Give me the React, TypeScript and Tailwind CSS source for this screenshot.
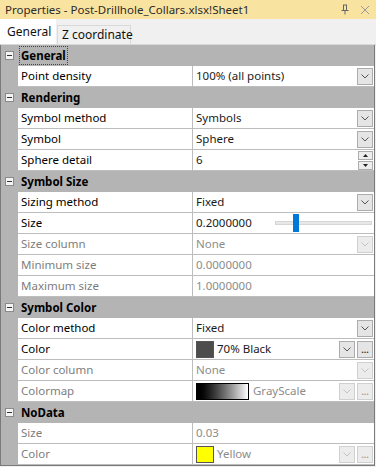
import React from "react";

type Prop = {
  label: string;
  value?: string;
  disabled?: boolean;
  control?: "drop" | "spin" | "slider" | "color" | "colormap" | "none";
  swatch?: string;
};

type Section = { title: string; props: Prop[] };

const sections: Section[] = [
  {
    title: "General",
    props: [{ label: "Point density", value: "100% (all points)", control: "drop" }],
  },
  {
    title: "Rendering",
    props: [
      { label: "Symbol method", value: "Symbols", control: "drop" },
      { label: "Symbol", value: "Sphere", control: "drop" },
      { label: "Sphere detail", value: "6", control: "spin" },
    ],
  },
  {
    title: "Symbol Size",
    props: [
      { label: "Sizing method", value: "Fixed", control: "drop" },
      { label: "Size", value: "0.2000000", control: "slider" },
      { label: "Size column", value: "None", control: "drop", disabled: true },
      { label: "Minimum size", value: "0.0000000", disabled: true },
      { label: "Maximum size", value: "1.0000000", disabled: true },
    ],
  },
  {
    title: "Symbol Color",
    props: [
      { label: "Color method", value: "Fixed", control: "drop" },
      { label: "Color", value: "70% Black", control: "color", swatch: "#4d4d4d" },
      { label: "Color column", value: "None", control: "drop", disabled: true },
      { label: "Colormap", value: "GrayScale", control: "colormap", disabled: true },
    ],
  },
  {
    title: "NoData",
    props: [
      { label: "Size", value: "0.03", disabled: true },
      { label: "Color", value: "Yellow", control: "color", swatch: "#ffff00", disabled: true },
    ],
  },
];

function Chevron({ disabled }: { disabled?: boolean }) {
  return (
    <svg width="8" height="5" viewBox="0 0 8 5">
      <path
        d="M0.5 0.5 L4 4 L7.5 0.5"
        fill="none"
        stroke={disabled ? "#c4c4c4" : "#555"}
        strokeWidth="1"
      />
    </svg>
  );
}

function DropButton({ disabled }: { disabled?: boolean }) {
  return (
    <div
      className={
        "w-[16px] h-[17px] flex items-center justify-center border " +
        (disabled ? "border-[#d0d0d0] bg-[#ececec]" : "border-[#acacac] bg-[#e5e5e5]")
      }
    >
      <Chevron disabled={disabled} />
    </div>
  );
}

function DotsButton({ disabled }: { disabled?: boolean }) {
  return (
    <div
      className={
        "w-[16px] h-[17px] flex items-end justify-center pb-[3px] border text-[9px] leading-none font-bold " +
        (disabled
          ? "border-[#d0d0d0] bg-[#ececec] text-[#a0a0a0]"
          : "border-[#acacac] bg-[#e5e5e5] text-[#333]")
      }
    >
      ...
    </div>
  );
}

function Value({ p }: { p: Prop }) {
  const textCls = p.disabled ? "text-[#8c8c8c]" : "text-[#1b1b1b]";
  if (p.control === "slider") {
    return (
      <div className="flex items-center h-full">
        <span className={"pl-[3px] w-[82px] " + textCls}>{p.value}</span>
        <div className="relative flex-1 h-full flex items-center pr-[2px]">
          <div className="w-full h-[4px] bg-[#e7e7e7] border border-[#d6d6d6]" />
          <div className="absolute left-[18px] top-[1px] w-[6px] h-[18px] bg-[#0078d7]" />
        </div>
      </div>
    );
  }
  return (
    <div className="flex items-center h-full">
      {p.control === "color" && (
        <div
          className="ml-[3px] mr-[3px] w-[18px] h-[17px] border border-[#555]"
          style={{ backgroundColor: p.swatch }}
        />
      )}
      {p.control === "colormap" && (
        <div className="ml-[3px] mr-[4px] w-[53px] h-[17px] border border-black bg-gradient-to-r from-black to-white" />
      )}
      <span className={"flex-1 " + (p.control === "color" || p.control === "colormap" ? "" : "pl-[3px] ") + textCls}>
        {p.value}
      </span>
      {p.control === "drop" && (
        <div className="pr-[1px]">
          <DropButton disabled={p.disabled} />
        </div>
      )}
      {(p.control === "color" || p.control === "colormap") && (
        <div className="flex gap-[2px] pr-[1px]">
          <DropButton disabled={p.disabled || p.control === "colormap"} />
          <DotsButton disabled={p.disabled || p.control === "colormap"} />
        </div>
      )}
      {p.control === "spin" && (
        <div className="pr-[1px] flex flex-col gap-[1px]">
          <div className="w-[15px] h-[9px] border border-[#acacac] bg-[#ededed] flex items-center justify-center">
            <svg width="5" height="3" viewBox="0 0 5 3">
              <path d="M0 3 L2.5 0 L5 3 Z" fill="#222" />
            </svg>
          </div>
          <div className="w-[15px] h-[9px] border border-[#acacac] bg-[#ededed] flex items-center justify-center">
            <svg width="5" height="3" viewBox="0 0 5 3">
              <path d="M0 0 L2.5 3 L5 0 Z" fill="#222" />
            </svg>
          </div>
        </div>
      )}
    </div>
  );
}

function Collapse() {
  return (
    <div className="w-[9px] h-[9px] border border-[#8a8a8a] bg-[#f4f4f4] flex items-center justify-center">
      <div className="w-[5px] h-[1px] bg-[#333]" />
    </div>
  );
}

export default function App() {
  return (
    <div
      className="w-[376px] h-[467px] bg-[#f0f0f0] text-[11.5px] overflow-hidden whitespace-nowrap"
      style={{ fontFamily: '"Noto Sans", "Open Sans", sans-serif' }}
    >
      {/* Title bar */}
      <div className="h-[19px] bg-[#f9e3a0] flex items-center pl-[5px] pr-[6px] text-[12px]">
        <span className="flex-1 text-[#2b2b2b] text-[11.5px]">Properties - Post-Drillhole_Collars.xlsx!Sheet1</span>
        <svg width="10" height="11" viewBox="0 0 10 11" className="mr-[10px]">
          <path d="M3 1 H7 M3.5 1 V6 M6.5 1 V6 M1.5 6.5 H8.5 M5 6.5 V10.5" stroke="#666" strokeWidth="1" fill="none" />
        </svg>
        <svg width="10" height="10" viewBox="0 0 10 10">
          <path d="M1 1 L9 9 M9 1 L1 9" stroke="#999" strokeWidth="1" fill="none" />
        </svg>
      </div>

      {/* Tabs */}
      <div className="h-[26px] flex items-end border-b border-[#d9d9d9]">
        <div className="w-[56px] h-[25px] bg-white flex items-center pl-[7px] text-[12px] text-[#111]">General</div>
        <div className="ml-[1px] w-[74px] h-[19px] bg-[#f0f0f0] border border-b-0 border-[#d9d9d9] flex items-center pl-[4px] text-[12px] text-[#111]">
          Z coordinate
        </div>
      </div>

      {/* Property grid */}
      <div className="w-[375px] bg-[#b4b4b4] border-l border-r border-b border-[#7a7a7a]">
        {sections.map((s, si) => (
          <div key={s.title}>
            <div className="h-[21px] flex items-center">
              <div className="w-[17px] flex justify-center">
                <Collapse />
              </div>
              <span
                className={
                  "ml-[2px] px-[1px] font-bold text-black " +
                  (si === 0 ? "outline outline-1 outline-dotted outline-[#444]" : "")
                }
              >
                {s.title}
              </span>
            </div>
            {s.props.map((p) => (
              <div key={s.title + p.label} className="h-[21px] flex">
                <div className="w-[17px]" />
                <div className="flex-1 flex bg-white border-b border-[#bdbdbd]">
                  <div
                    className={
                      "w-[175px] pl-[3px] flex items-center border-r border-[#bdbdbd] " +
                      (p.disabled ? "text-[#7d7d7d]" : "text-black")
                    }
                  >
                    {p.label}
                  </div>
                  <div className="flex-1">
                    <Value p={p} />
                  </div>
                </div>
              </div>
            ))}
          </div>
        ))}
      </div>
    </div>
  );
}
